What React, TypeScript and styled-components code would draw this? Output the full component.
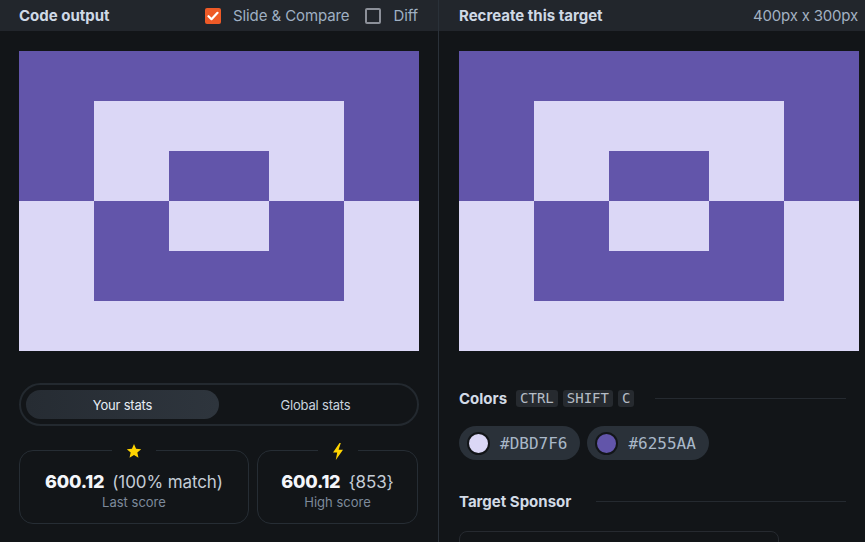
import React from "react";
import styled, { createGlobalStyle } from "styled-components";

const Global = createGlobalStyle`
  html, body { margin: 0; padding: 0; background: #121518; }
  body { font-family: Inter, "Open Sans", "Liberation Sans", sans-serif; width: 865px; height: 542px; overflow: hidden; }
  * { box-sizing: border-box; }
`;

const Page = styled.div`
  display: grid;
  grid-template-columns: 438px 1px 426px;
  height: 542px;
  background: #121518;
`;

const Divider = styled.div`
  background: #2a3139;
`;

const Panel = styled.section`
  display: flex;
  flex-direction: column;
  min-width: 0;
`;

const Header = styled.header<{ $left: number }>`
  height: 31px;
  background: #22262c;
  display: flex;
  align-items: center;
  padding: 0 7px 0 ${(p) => p.$left}px;
  gap: 12px;
`;

const Title = styled.h2`
  margin: 0;
  font-size: 15px;
  font-weight: 700;
  color: #cfd9e6;
  flex: 1;
`;

const Meta = styled.span`
  font-size: 15px;
  color: #a2b1c3;
  letter-spacing: -0.2px;
`;

const Checks = styled.div`
  display: flex;
  align-items: center;
  gap: 16px;
  margin-right: 13px;
`;

const Check = styled.label`
  display: flex;
  align-items: center;
  gap: 12px;
  font-size: 15px;
  color: #9fb0c3;
  letter-spacing: -0.1px;
`;

const Box = styled.span<{ $on?: boolean }>`
  width: 16px;
  height: 16px;
  border-radius: 2px;
  display: inline-flex;
  align-items: center;
  justify-content: center;
  background: ${(p) => (p.$on ? "#ee5a27" : "transparent")};
  border: ${(p) => (p.$on ? "none" : "2px solid #8c9099")};
`;

const Body = styled.div<{ $left: number }>`
  padding: 20px 19px 0 ${(p) => p.$left}px;
  display: flex;
  flex-direction: column;
`;

const Target = styled.div`
  width: 400px;
  height: 300px;
  display: block;
  flex-shrink: 0;
`;

const Toggle = styled.div`
  margin-top: 32px;
  height: 43px;
  border: 2px solid #23292f;
  border-radius: 22px;
  padding: 5px;
  display: grid;
  grid-template-columns: 193px 1fr;
`;

const Tab = styled.div<{ $active?: boolean }>`
  border-radius: 15px;
  display: flex;
  align-items: center;
  justify-content: center;
  font-size: 13px;
  letter-spacing: -0.2px;
  color: ${(p) => (p.$active ? "#e6edf5" : "#c9d3de")};
  background: ${(p) => (p.$active ? "linear-gradient(90deg, #262c33, #2e353d)" : "transparent")};
`;

const Cards = styled.div`
  margin-top: 24px;
  display: grid;
  grid-template-columns: 230px 161px;
  gap: 8px;
`;

const Card = styled.div`
  position: relative;
  height: 74px;
  border: 1.5px solid #262d34;
  border-radius: 14px;
  display: flex;
  flex-direction: column;
  align-items: center;
  justify-content: center;
  padding-top: 6px;
`;

const CardIcon = styled.span`
  position: absolute;
  top: -10px;
  left: 50%;
  transform: translateX(-50%);
  background: #121518;
  padding: 0 14px;
  height: 20px;
  display: flex;
  align-items: center;
`;

const Score = styled.div`
  display: flex;
  align-items: baseline;
  gap: 8px;
`;

const Big = styled.span`
  font-size: 18px;
  font-weight: 800;
  color: #f4f6fa;
  letter-spacing: -0.2px;
`;

const Extra = styled.span`
  font-size: 17px;
  color: #c4ccd6;
  letter-spacing: -0.1px;
`;

const Label = styled.div`
  font-size: 13px;
  color: #7d8a9b;
  margin-top: 2px;
`;

const NextBox = styled.div`
  margin: 18px 14px 0;
  height: 20px;
  border: 1.5px solid #262d34;
  border-radius: 10px;
`;

const SectionHead = styled.div<{ $top: number }>`
  margin-top: ${(p) => p.$top}px;
  display: flex;
  align-items: center;
  gap: 5px;
  &::after {
    content: "";
    flex: 1;
    height: 1px;
    background: #252a30;
    margin-left: 16px;
  }
`;

const SectionTitle = styled.h3`
  margin: 0 4px 0 0;
  font-size: 15px;
  font-weight: 700;
  color: #d2dbe6;
`;

const Kbd = styled.kbd`
  font-family: "DejaVu Sans Mono", "Liberation Mono", monospace;
  font-size: 14px;
  color: #b5bcc5;
  background: #262a2f;
  border-radius: 3px;
  padding: 1px 4px;
  line-height: 15px;
`;

const Swatches = styled.div`
  margin-top: 18px;
  display: flex;
  gap: 7px;
`;

const Swatch = styled.div`
  height: 34px;
  border-radius: 17px;
  background: #2a3139;
  display: flex;
  align-items: center;
  gap: 10px;
  padding: 0 13px 0 8px;
  font-family: "DejaVu Sans Mono", "Liberation Mono", monospace;
  font-size: 16px;
  color: #a9b8c8;
`;

const Dot = styled.span<{ $c: string }>`
  width: 23px;
  height: 23px;
  border-radius: 50%;
  background: ${(p) => p.$c};
  border: 2px solid #121518;
`;

const Sponsor = styled.div`
  margin-top: 20px;
  width: 320px;
  height: 30px;
  border: 1.5px solid #262a30;
  border-radius: 8px;
`;

const Star = () => (
  <svg width="16" height="16" viewBox="0 0 24 24">
    <path d="M12 1.5l3.1 7.1 7.7.7-5.8 5.1 1.7 7.6L12 18l-6.7 4 1.7-7.6L1.2 9.3l7.7-.7z" fill="#ffd400" />
  </svg>
);

const Bolt = () => (
  <svg width="12" height="17" viewBox="0 0 12 17">
    <path d="M7.5 0L1 9.5h4.2L3.8 17 11 6.8H6.6L8.8 0z" fill="#ffd400" />
  </svg>
);

const Art = () => (
  <Target>
    <svg width="400" height="300" viewBox="0 0 400 300" style={{ display: "block" }}>
      <rect x="0" y="0" width="400" height="150" fill="#6255AA" />
      <rect x="0" y="150" width="400" height="150" fill="#DBD7F6" />
      <rect x="75" y="50" width="250" height="100" fill="#DBD7F6" />
      <rect x="75" y="150" width="250" height="100" fill="#6255AA" />
      <rect x="150" y="100" width="100" height="50" fill="#6255AA" />
      <rect x="150" y="150" width="100" height="50" fill="#DBD7F6" />
    </svg>
  </Target>
);

export default function App() {
  return (
    <>
      <Global />
      <Page>
        <Panel>
          <Header $left={19}>
            <Title>Code output</Title>
            <Checks>
              <Check>
                <Box $on>
                  <svg width="12" height="10" viewBox="0 0 12 10">
                    <path d="M1.5 5.2l3 3L10.5 1.8" stroke="#fff" strokeWidth="2.2" fill="none" strokeLinecap="round" strokeLinejoin="round" />
                  </svg>
                </Box>
                Slide &amp; Compare
              </Check>
              <Check>
                <Box />
                Diff
              </Check>
            </Checks>
          </Header>
          <Body $left={19}>
            <Art />
            <Toggle>
              <Tab $active>Your stats</Tab>
              <Tab>Global stats</Tab>
            </Toggle>
            <Cards>
              <Card>
                <CardIcon><Star /></CardIcon>
                <Score>
                  <Big>600.12</Big>
                  <Extra>(100% match)</Extra>
                </Score>
                <Label>Last score</Label>
              </Card>
              <Card>
                <CardIcon><Bolt /></CardIcon>
                <Score>
                  <Big>600.12</Big>
                  <Extra>{"{853}"}</Extra>
                </Score>
                <Label>High score</Label>
              </Card>
            </Cards>
            <NextBox />
          </Body>
        </Panel>
        <Divider />
        <Panel>
          <Header $left={20}>
            <Title>Recreate this target</Title>
            <Meta>400px x 300px</Meta>
          </Header>
          <Body $left={20}>
            <Art />
            <SectionHead $top={38}>
              <SectionTitle>Colors</SectionTitle>
              <Kbd>CTRL</Kbd>
              <Kbd>SHIFT</Kbd>
              <Kbd>C</Kbd>
            </SectionHead>
            <Swatches>
              <Swatch><Dot $c="#DBD7F6" />#DBD7F6</Swatch>
              <Swatch><Dot $c="#6255AA" />#6255AA</Swatch>
            </Swatches>
            <SectionHead $top={32}>
              <SectionTitle>Target Sponsor</SectionTitle>
            </SectionHead>
            <Sponsor />
          </Body>
        </Panel>
      </Page>
    </>
  );
}
